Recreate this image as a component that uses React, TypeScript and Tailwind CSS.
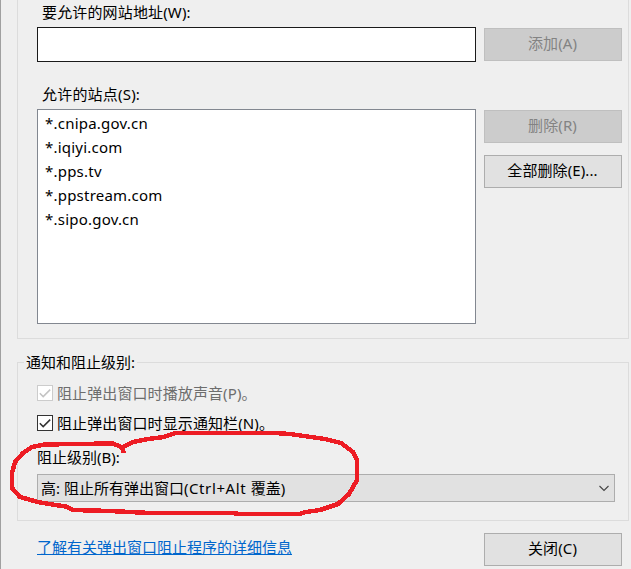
import { ReactNode } from "react";

const sites = [
  "*.cnipa.gov.cn",
  "*.iqiyi.com",
  "*.pps.tv",
  "*.ppstream.com",
  "*.sipo.gov.cn",
];

interface ButtonProps {
  children: ReactNode;
  disabled?: boolean;
}

const Button = ({ children, disabled }: ButtonProps) => (
  <button
    disabled={disabled}
    className="block h-[33px] w-[138px] border border-[#adadad] bg-[#e1e1e1] pr-px pb-[2px] text-center leading-[29px] tracking-[0.1px] disabled:border-[#bfbfbf] disabled:bg-[#cccccc] disabled:text-[#838383]"
  >
    {children}
  </button>
);

interface CheckRowProps {
  children: ReactNode;
  disabled?: boolean;
}

const CheckRow = ({ children, disabled }: CheckRowProps) => (
  <label
    className={
      disabled
        ? "flex h-[30px] items-center gap-1 text-[#6d6d6d]"
        : "flex h-[30px] items-center gap-1 text-black"
    }
  >
    <span
      className={
        disabled
          ? "size-4 shrink-0 border border-[#cccccc] bg-white text-[#c3c3c3]"
          : "size-4 shrink-0 border border-[#333333] bg-white text-[#333333]"
      }
    >
      <svg viewBox="0 0 14 14" className="size-[14px]" fill="none" stroke="currentColor" strokeWidth="1.5">
        <path d="M1.8 7.2 L5.2 10.6 L12.2 3.6" />
      </svg>
    </span>
    <span className="tracking-[0.1px]">{children}</span>
  </label>
);

const App = () => {
  return (
    <div className="relative h-[569px] w-[631px] overflow-hidden border-l border-[#a0a0a0] bg-[#efefef] pl-4 font-['Noto_Sans','Noto_Sans_CJK_SC',sans-serif] text-[15px] whitespace-nowrap text-black">
      <section className="h-[339px] w-[612px] border-x border-b border-[#dcdcdc] pl-[19px]">
        <div className="h-[27px] pl-[5px] leading-[24px] tracking-[0.15px]">要允许的网站地址(W):</div>
        <div className="flex items-center gap-2">
          <input className="h-[35px] w-[439px] border border-[#1a1a1a] bg-white px-1 outline-none" />
          <Button disabled>添加(A)</Button>
        </div>
        <div className="flex h-[47px] items-end pb-[3px] pl-[5px] leading-[24px] tracking-[0.2px]">允许的站点(S):</div>
        <div className="flex items-start gap-2">
          <ul className="h-[215px] w-[439px] border border-[#828790] bg-white pt-px pl-[7px] tracking-[0.22px]">
            {sites.map((site) => (
              <li key={site} className="h-6 leading-6">
                {site}
              </li>
            ))}
          </ul>
          <div className="flex flex-col gap-3 pt-px">
            <Button disabled>删除(R)</Button>
            <Button>全部删除(E)...</Button>
          </div>
        </div>
      </section>

      <section className="mt-[23px] h-[159px] w-[612px] border border-[#dcdcdc] pl-[19px]">
        <h2 className="-mt-[13px] -ml-[13px] h-6 w-[113px] bg-[#efefef] pl-[2px] leading-6">通知和阻止级别:</h2>
        <div className="pt-[4px]">
          <CheckRow disabled>阻止弹出窗口时播放声音(P)。</CheckRow>
          <CheckRow>阻止弹出窗口时显示通知栏(N)。</CheckRow>
        </div>
        <div className="mt-[7px] h-6 leading-6">阻止级别(B):</div>
        <div className="mt-[5px] flex h-7 w-[578px] items-center justify-between border border-[#adadad] bg-[#e1e1e1] pr-1 pl-[3px]">
          <span className="leading-[26px]">
            高: 阻止所有弹出窗口<span className="tracking-[0.6px]">(Ctrl+Alt </span>覆盖)
          </span>
          <svg viewBox="0 0 12 8" className="h-2 w-3" fill="none" stroke="#444444" strokeWidth="1.1">
            <path d="M1.5 2 L6 6.5 L10.5 2" />
          </svg>
        </div>
      </section>

      <footer className="flex items-start justify-between pt-3 pr-[9px] pl-5">
        <a href="#" className="mt-[2px] leading-6 text-[#0066cc] underline">
          了解有关弹出窗口阻止程序的详细信息
        </a>
        <Button>关闭(C)</Button>
      </footer>

      {/* hand-drawn marker around the blocking level */}
      <svg
        className="pointer-events-none absolute top-0 -left-px h-[569px] w-[631px]"
        viewBox="0 0 631 569"
        fill="none"
        stroke="#ed1c24"
        strokeWidth="4.5"
        strokeLinejoin="round"
        shapeRendering="crispEdges"
      >
        <path d="M123.5 453 L123 449 L119 446 L113 443.5 L75 444 L45 444.5 L32 447 L23 453 L15 462 L12 473 L12 488 L20 497 L38 502 L55 505 L66 506.5 L73 510 L110 511 L130 512 L150 513 L236 513 L236 514 L299 514 L306 512 L320 510 L338 504 L349 494 L357 480 L357 460 L353 452 L341 443 L325 439 L290 434 L275 433 L175 433 L164 437 L148 439 L133 442 L123 447" />
      </svg>
    </div>
  );
};

export default App;
